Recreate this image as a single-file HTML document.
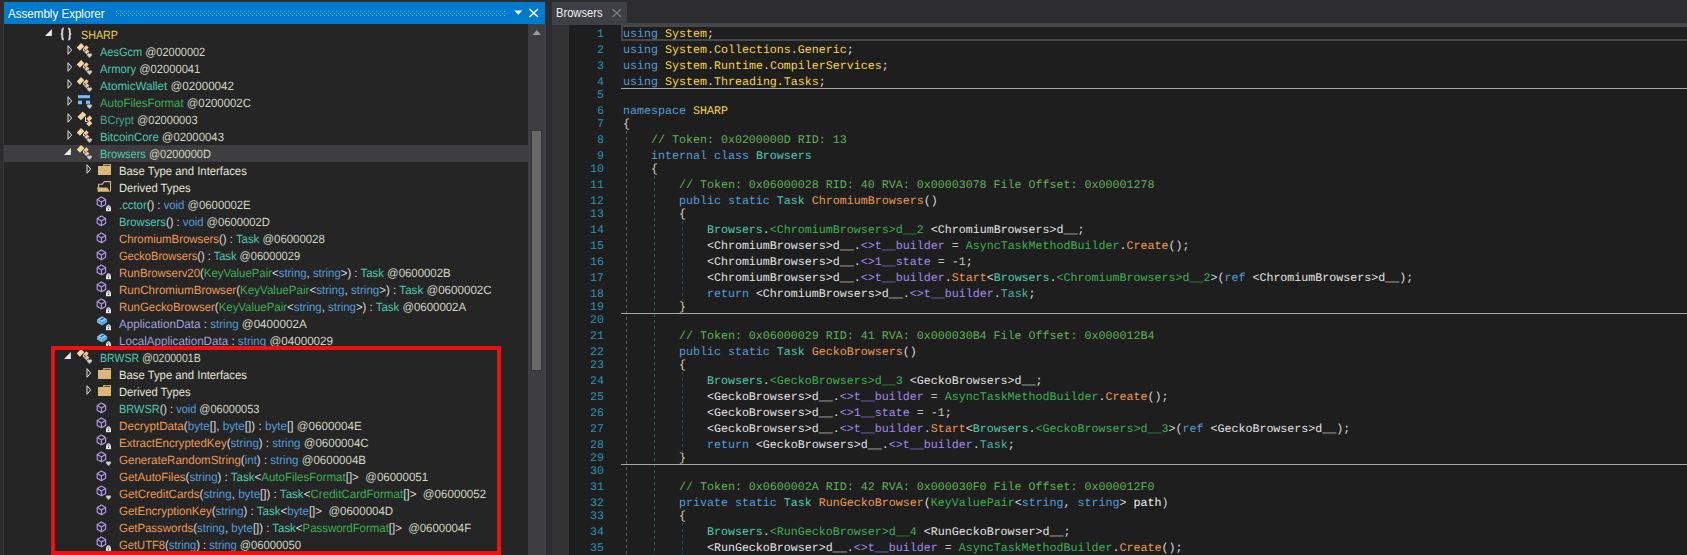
<!DOCTYPE html>
<html><head><meta charset="utf-8"><style>
*{margin:0;padding:0;box-sizing:border-box}
html,body{width:1687px;height:555px;overflow:hidden;background:#2D2D30;position:relative;font-family:"Liberation Sans",sans-serif}
.abs{position:absolute}
#title{position:absolute;left:4px;top:2px;width:541px;height:22px;background:#007ACC}
#title .t{position:absolute;left:3.5px;top:2px;line-height:21px;font-size:12px;color:#FFFFFF;white-space:pre;transform:scaleX(0.965);transform-origin:0 0}
#grip{position:absolute;left:112px;top:8px;width:393px;height:9px;
 background-image:radial-gradient(circle at 1px 1px,#4FA8EC 0.9px,transparent 1px),radial-gradient(circle at 3px 3px,#4FA8EC 0.9px,transparent 1px);
 background-size:4px 4px;background-position:0 0,0 0}
#tree{position:absolute;left:4px;top:24px;width:524px;height:531px;background:#252526;overflow:hidden}
#treein{position:absolute;left:-4px;top:-24px;width:1000px;height:600px}
.sel{position:absolute;left:0;width:528px;height:17px;background:#3E3E40}
.ex,.ic{position:absolute;overflow:visible}
.tr{position:absolute;height:17px;line-height:17px;padding-top:1px;text-rendering:geometricPrecision;font-size:12px;white-space:pre;transform-origin:0 50%}
#sb{position:absolute;left:528px;top:24px;width:18px;height:531px;background:#3E3E42}
#thumb{position:absolute;left:532px;top:131px;width:9px;height:239px;background:#686868;box-shadow:0 0 0 1px #363638}
#red{position:absolute;left:51px;top:346px;width:450px;height:209px;border:4px solid #EE1111}
#lstrip{position:absolute;left:3px;top:24px;width:1px;height:531px;background:#363638}
#tab{position:absolute;left:552px;top:2px;width:75px;height:23px;background:#3F3F46}
#tab .t{position:absolute;left:4px;top:0;line-height:22px;font-size:12px;color:#F1F1F1;white-space:pre;transform:scaleX(0.93);transform-origin:0 0}
#band{position:absolute;left:627px;top:23px;width:1060px;height:2px;background:#444446}
#ed{position:absolute;left:552px;top:25px;width:1135px;height:530px;background:#1E1E1E}
#gm{position:absolute;left:552px;top:25px;width:17px;height:530px;background:#333334}
.cl{position:absolute;left:623px;height:16px;line-height:16px;font-family:"Liberation Mono",monospace;font-size:11.7px;text-rendering:geometricPrecision;white-space:pre;transform:scaleX(0.99700);transform-origin:0 0}
.ln{position:absolute;left:569px;width:35px;text-align:right;height:16px;line-height:16px;font-family:"Liberation Mono",monospace;font-size:11.7px;text-rendering:geometricPrecision;color:#2B91AF;letter-spacing:-0.02px}
.sep{position:absolute;left:621px;width:1066px;height:1px;background:#A8A8A8}
.gd{position:absolute;width:1px;background-size:1px 6px}
#caret{position:absolute;left:621px;top:25px;width:1070px;height:16px;border:2px solid #474747;background:#1E1E1E}
</style></head><body>
<svg width="0" height="0" style="position:absolute"><defs>
<symbol id="excol" viewBox="0 0 7 11"><path d="M1,0.7 L4.6,5 L1,9.3 Z" fill="none" stroke="#E2E2E2" stroke-width="1"/></symbol>
<symbol id="exexp" viewBox="0 0 8 8"><path d="M6.9,0 V7 H-0.1 Z" fill="#E8E8E8"/></symbol>
<symbol id="i_ns" viewBox="0 0 16 16"><g fill="none" stroke="#D6D6D6" stroke-width="1.9"><path d="M5.8,2.5 C4.3,2.5 4.3,3.2 4.3,4.5 V6.8 C4.3,7.6 3.8,8 2.8,8 C3.8,8 4.3,8.4 4.3,9.2 V11.5 C4.3,12.8 4.3,13.5 5.8,13.5"/><path d="M10.2,2.5 C11.7,2.5 11.7,3.2 11.7,4.5 V6.8 C11.7,7.6 12.2,8 13.2,8 C12.2,8 11.7,8.4 11.7,9.2 V11.5 C11.7,12.8 11.7,13.5 10.2,13.5"/></g></symbol>
<symbol id="i_cls" viewBox="0 0 16 16"><rect x="1.1000000000000005" y="2.4000000000000004" width="7.6" height="5.0" fill="#F2D49A" transform="rotate(-45 4.9 4.9)"/><rect x="9.9" y="5.6" width="4.8" height="3.8" fill="#F2CE9C" transform="rotate(-45 12.3 7.5)"/><rect x="9.9" y="10.6" width="4.8" height="3.8" fill="#F2CE9C" transform="rotate(-45 12.3 12.5)"/><path d="M8.5,6.2 V10.6 H10.6" fill="none" stroke="#F0F0F0" stroke-width="1"/></symbol>
<symbol id="i_clsh" viewBox="0 0 16 16"><rect x="0.3999999999999999" y="1.6" width="6.2" height="4.6" fill="#F0D79E" transform="rotate(-45 3.5 3.9)"/><rect x="7.1" y="3.15" width="4.0" height="3.3" fill="#F5C8A2" transform="rotate(-45 9.1 4.8)"/><rect x="8.0" y="7.35" width="4.0" height="3.3" fill="#F5C8A2" transform="rotate(-45 10.0 9.0)"/><path d="M6.5,5.6 V7.9 H8.3" fill="none" stroke="#F4F4F4" stroke-width="1"/><path d="M12.5,15.3 L10.1,12.7 C9.3,11.8 9.7,9.9 11.2,9.9 C11.9,9.9 12.3,10.3 12.5,10.7 C12.7,10.3 13.1,9.9 13.8,9.9 C15.3,9.9 15.7,11.8 14.9,12.7 Z" fill="#CFCFCF" stroke="#252526" stroke-width="0.7"/></symbol>
<symbol id="i_struct" viewBox="0 0 16 16"><rect x="1" y="1.2" width="12" height="3" fill="#75BEFF"/><rect x="1" y="6.6" width="4" height="3.6" fill="#75BEFF"/><rect x="9" y="6.6" width="4" height="3.6" fill="#75BEFF"/><path d="M12.5,15.3 L10.1,12.7 C9.3,11.8 9.7,9.9 11.2,9.9 C11.9,9.9 12.3,10.3 12.5,10.7 C12.7,10.3 13.1,9.9 13.8,9.9 C15.3,9.9 15.7,11.8 14.9,12.7 Z" fill="#CFCFCF" stroke="#252526" stroke-width="0.7"/></symbol>
<symbol id="i_fold" viewBox="0 0 16 16"><path d="M2,3.9 H7.2 V2 H15 V12.9 H2 Z" fill="#DCB67A"/><path d="M8.3,3.3 H14.2" stroke="#3A3020" stroke-width="0.9"/></symbol>
<symbol id="i_foldo" viewBox="0 0 16 16"><path d="M2.6,12.6 V5.3 H6.4 L8.2,2.6 H14.5 V12.6" fill="none" stroke="#DCB67A" stroke-width="1.1"/><path d="M1.1,8.4 H11.2 L14,12.8 H1.9 Z" fill="#DCB67A"/></symbol>
<symbol id="i_meth" viewBox="0 0 16 16"><g transform="translate(0,1.9)"><g fill="none" stroke="#B59AE6" stroke-width="1.15" stroke-linejoin="round"><path d="M5.4,1.1 L9.6,3.5 V8.4 L5.4,10.8 L1.2,8.4 V3.5 Z"/><path d="M1.4,3.6 L5.4,6.1 L9.4,3.6 M5.4,6.1 V10.6"/></g></g></symbol>
<symbol id="i_methl" viewBox="0 0 16 16"><g fill="none" stroke="#B59AE6" stroke-width="1.15" stroke-linejoin="round"><path d="M5.4,1.1 L9.6,3.5 V8.4 L5.4,10.8 L1.2,8.4 V3.5 Z"/><path d="M1.4,3.6 L5.4,6.1 L9.4,3.6 M5.4,6.1 V10.6"/></g><path d="M11.1,11.6 V10.9 C11.1,9.4 13.9,9.4 13.9,10.9 V11.6" fill="none" stroke="#E4E4E4" stroke-width="1.3"/><rect x="10" y="11.3" width="5" height="3.9" fill="#E4E4E4"/><rect x="12" y="12.7" width="1" height="1.2" fill="#3A3A3A"/></symbol>
<symbol id="i_methh" viewBox="0 0 16 16"><g fill="none" stroke="#B59AE6" stroke-width="1.15" stroke-linejoin="round"><path d="M5.4,1.1 L9.6,3.5 V8.4 L5.4,10.8 L1.2,8.4 V3.5 Z"/><path d="M1.4,3.6 L5.4,6.1 L9.4,3.6 M5.4,6.1 V10.6"/></g><path d="M12.5,15.3 L10.1,12.7 C9.3,11.8 9.7,9.9 11.2,9.9 C11.9,9.9 12.3,10.3 12.5,10.7 C12.7,10.3 13.1,9.9 13.8,9.9 C15.3,9.9 15.7,11.8 14.9,12.7 Z" fill="#CFCFCF" stroke="#252526" stroke-width="0.7"/></symbol>
<symbol id="i_fldl" viewBox="0 0 16 16"><path d="M1,4.6 L6,1.3 L11.2,4.2 L6.2,7.4 Z" fill="#8ACAFF"/><path d="M1,4.6 L6.2,7.4 V10.4 L1,7.6 Z" fill="#6AB6F2"/><path d="M6.2,7.4 L11.2,4.2 V7.3 L6.2,10.4 Z" fill="#5AAAE8"/><path d="M4.6,4.9 L7.6,3" stroke="#1E3A55" stroke-width="1.1"/><path d="M11.1,11.6 V10.9 C11.1,9.4 13.9,9.4 13.9,10.9 V11.6" fill="none" stroke="#E4E4E4" stroke-width="1.3"/><rect x="10" y="11.3" width="5" height="3.9" fill="#E4E4E4"/><rect x="12" y="12.7" width="1" height="1.2" fill="#3A3A3A"/></symbol>
</defs></svg>
<div id="title"><div class="t">Assembly Explorer</div></div>
<svg class="abs" style="left:116px;top:11px" width="390" height="5"><defs><pattern id="gp" width="4" height="4" patternUnits="userSpaceOnUse"><rect x="0" y="0" width="1" height="1" fill="#62BAF6"/><rect x="2" y="2" width="1" height="1" fill="#62BAF6"/></pattern></defs><rect width="390" height="5" fill="url(#gp)"/></svg>
<svg class="abs" style="left:514px;top:10px" width="9" height="6"><path d="M0.3,0.5 H8.3 L4.3,4.8 Z" fill="#FFFFFF"/></svg>
<svg class="abs" style="left:528px;top:8px" width="12" height="10"><path d="M1.5,1 L10,9 M10,1 L1.5,9" stroke="#FFFFFF" stroke-width="1.6"/></svg>
<div id="tree"><div id="treein">
<svg class="ex" style="left:45px;top:29px" width="8" height="8"><use href="#exexp"/></svg><svg class="ic" style="left:58px;top:26px" width="16" height="16"><use href="#i_ns"/></svg><div class="tr" id="r0" style="left:81.00px;top:26px;transform:scaleX(0.8927)"><span style="color:#EDCF55">SHARP</span></div><svg class="ex" style="left:67px;top:45px" width="7" height="11"><use href="#excol"/></svg><svg class="ic" style="left:77px;top:43px" width="16" height="16"><use href="#i_clsh"/></svg><div class="tr" id="r1" style="left:100.00px;top:43px;transform:scaleX(0.9157)"><span style="color:#4EC9B0">AesGcm</span><span style="color:#D2D6C2"> @02000002</span></div><svg class="ex" style="left:67px;top:62px" width="7" height="11"><use href="#excol"/></svg><svg class="ic" style="left:77px;top:60px" width="16" height="16"><use href="#i_clsh"/></svg><div class="tr" id="r2" style="left:100.00px;top:60px;transform:scaleX(0.9324)"><span style="color:#4EC9B0">Armory</span><span style="color:#D2D6C2"> @02000041</span></div><svg class="ex" style="left:67px;top:79px" width="7" height="11"><use href="#excol"/></svg><svg class="ic" style="left:77px;top:77px" width="16" height="16"><use href="#i_clsh"/></svg><div class="tr" id="r3" style="left:100.00px;top:77px;transform:scaleX(0.9674)"><span style="color:#4EC9B0">AtomicWallet</span><span style="color:#D2D6C2"> @02000042</span></div><svg class="ex" style="left:67px;top:96px" width="7" height="11"><use href="#excol"/></svg><svg class="ic" style="left:77px;top:94px" width="16" height="16"><use href="#i_struct"/></svg><div class="tr" id="r4" style="left:100.00px;top:94px;transform:scaleX(0.9497)"><span style="color:#3DAE55">AutoFilesFormat</span><span style="color:#D2D6C2"> @0200002C</span></div><svg class="ex" style="left:67px;top:113px" width="7" height="11"><use href="#excol"/></svg><svg class="ic" style="left:77px;top:111px" width="16" height="16"><use href="#i_cls"/></svg><div class="tr" id="r5" style="left:100.00px;top:111px;transform:scaleX(0.9245)"><span style="color:#40A68B">BCrypt</span><span style="color:#D2D6C2"> @02000003</span></div><svg class="ex" style="left:67px;top:130px" width="7" height="11"><use href="#excol"/></svg><svg class="ic" style="left:77px;top:128px" width="16" height="16"><use href="#i_clsh"/></svg><div class="tr" id="r6" style="left:100.00px;top:128px;transform:scaleX(0.9466)"><span style="color:#4EC9B0">BitcoinCore</span><span style="color:#D2D6C2"> @02000043</span></div><div class="sel" style="top:145px"></div><svg class="ex" style="left:64px;top:148px" width="8" height="8"><use href="#exexp"/></svg><svg class="ic" style="left:77px;top:145px" width="16" height="16"><use href="#i_clsh"/></svg><div class="tr" id="r7" style="left:100.00px;top:145px;transform:scaleX(0.9174)"><span style="color:#4EC9B0">Browsers</span><span style="color:#D2D6C2"> @0200000D</span></div><svg class="ex" style="left:86px;top:164px" width="7" height="11"><use href="#excol"/></svg><svg class="ic" style="left:96px;top:162px" width="16" height="16"><use href="#i_fold"/></svg><div class="tr" id="r8" style="left:119.00px;top:162px;transform:scaleX(0.9404)"><span style="color:#E6E6D8">Base Type and Interfaces</span></div><svg class="ic" style="left:96px;top:179px" width="16" height="16"><use href="#i_foldo"/></svg><div class="tr" id="r9" style="left:119.00px;top:179px;transform:scaleX(0.9351)"><span style="color:#E6E6D8">Derived Types</span></div><svg class="ic" style="left:96px;top:196px" width="16" height="16"><use href="#i_methl"/></svg><div class="tr" id="r10" style="left:119.00px;top:196px;transform:scaleX(0.9429)"><span style="color:#4EC9B0">.cctor</span><span style="color:#DCDCDC">() : </span><span style="color:#569CD6">void</span><span style="color:#D2D6C2"> @0600002E</span></div><svg class="ic" style="left:96px;top:213px" width="16" height="16"><use href="#i_meth"/></svg><div class="tr" id="r11" style="left:119.00px;top:213px;transform:scaleX(0.9379)"><span style="color:#4EC9B0">Browsers</span><span style="color:#DCDCDC">() : </span><span style="color:#569CD6">void</span><span style="color:#D2D6C2"> @0600002D</span></div><svg class="ic" style="left:96px;top:230px" width="16" height="16"><use href="#i_meth"/></svg><div class="tr" id="r12" style="left:119.00px;top:230px;transform:scaleX(0.9493)"><span style="color:#EC9A52">ChromiumBrowsers</span><span style="color:#DCDCDC">() : </span><span style="color:#4EC9B0">Task</span><span style="color:#D2D6C2"> @06000028</span></div><svg class="ic" style="left:96px;top:247px" width="16" height="16"><use href="#i_meth"/></svg><div class="tr" id="r13" style="left:119.00px;top:247px;transform:scaleX(0.9235)"><span style="color:#EC9A52">GeckoBrowsers</span><span style="color:#DCDCDC">() : </span><span style="color:#4EC9B0">Task</span><span style="color:#D2D6C2"> @06000029</span></div><svg class="ic" style="left:96px;top:264px" width="16" height="16"><use href="#i_methl"/></svg><div class="tr" id="r14" style="left:119.00px;top:264px;transform:scaleX(0.9493)"><span style="color:#EC9A52">RunBrowserv20</span><span style="color:#DCDCDC">(</span><span style="color:#3DAE55">KeyValuePair</span><span style="color:#DCDCDC">&lt;</span><span style="color:#569CD6">string</span><span style="color:#DCDCDC">, </span><span style="color:#569CD6">string</span><span style="color:#DCDCDC">&gt;) : </span><span style="color:#4EC9B0">Task</span><span style="color:#D2D6C2"> @0600002B</span></div><svg class="ic" style="left:96px;top:281px" width="16" height="16"><use href="#i_methl"/></svg><div class="tr" id="r15" style="left:119.00px;top:281px;transform:scaleX(0.9655)"><span style="color:#EC9A52">RunChromiumBrowser</span><span style="color:#DCDCDC">(</span><span style="color:#3DAE55">KeyValuePair</span><span style="color:#DCDCDC">&lt;</span><span style="color:#569CD6">string</span><span style="color:#DCDCDC">, </span><span style="color:#569CD6">string</span><span style="color:#DCDCDC">&gt;) : </span><span style="color:#4EC9B0">Task</span><span style="color:#D2D6C2"> @0600002C</span></div><svg class="ic" style="left:96px;top:298px" width="16" height="16"><use href="#i_methl"/></svg><div class="tr" id="r16" style="left:119.00px;top:298px;transform:scaleX(0.9518)"><span style="color:#EC9A52">RunGeckoBrowser</span><span style="color:#DCDCDC">(</span><span style="color:#3DAE55">KeyValuePair</span><span style="color:#DCDCDC">&lt;</span><span style="color:#569CD6">string</span><span style="color:#DCDCDC">, </span><span style="color:#569CD6">string</span><span style="color:#DCDCDC">&gt;) : </span><span style="color:#4EC9B0">Task</span><span style="color:#D2D6C2"> @0600002A</span></div><svg class="ic" style="left:96px;top:315px" width="16" height="16"><use href="#i_fldl"/></svg><div class="tr" id="r17" style="left:119.00px;top:315px;transform:scaleX(0.9691)"><span style="color:#A0A0D8">ApplicationData</span><span style="color:#DCDCDC"> : </span><span style="color:#569CD6">string</span><span style="color:#D2D6C2"> @0400002A</span></div><svg class="ic" style="left:96px;top:332px" width="16" height="16"><use href="#i_fldl"/></svg><div class="tr" id="r18" style="left:119.00px;top:332px;transform:scaleX(0.9683)"><span style="color:#A0A0D8">LocalApplicationData</span><span style="color:#DCDCDC"> : </span><span style="color:#569CD6">string</span><span style="color:#D2D6C2"> @04000029</span></div><svg class="ex" style="left:64px;top:352px" width="8" height="8"><use href="#exexp"/></svg><svg class="ic" style="left:77px;top:349px" width="16" height="16"><use href="#i_clsh"/></svg><div class="tr" id="r19" style="left:100.00px;top:349px;transform:scaleX(0.8783)"><span style="color:#4EC9B0">BRWSR</span><span style="color:#D2D6C2"> @0200001B</span></div><svg class="ex" style="left:86px;top:368px" width="7" height="11"><use href="#excol"/></svg><svg class="ic" style="left:96px;top:366px" width="16" height="16"><use href="#i_fold"/></svg><div class="tr" id="r20" style="left:119.00px;top:366px;transform:scaleX(0.9412)"><span style="color:#E6E6D8">Base Type and Interfaces</span></div><svg class="ex" style="left:86px;top:385px" width="7" height="11"><use href="#excol"/></svg><svg class="ic" style="left:96px;top:383px" width="16" height="16"><use href="#i_fold"/></svg><div class="tr" id="r21" style="left:119.00px;top:383px;transform:scaleX(0.9351)"><span style="color:#E6E6D8">Derived Types</span></div><svg class="ic" style="left:96px;top:400px" width="16" height="16"><use href="#i_meth"/></svg><div class="tr" id="r22" style="left:119.00px;top:400px;transform:scaleX(0.9150)"><span style="color:#4EC9B0">BRWSR</span><span style="color:#DCDCDC">() : </span><span style="color:#569CD6">void</span><span style="color:#D2D6C2"> @06000053</span></div><svg class="ic" style="left:96px;top:417px" width="16" height="16"><use href="#i_methl"/></svg><div class="tr" id="r23" style="left:119.00px;top:417px;transform:scaleX(0.9720)"><span style="color:#EC9A52">DecryptData</span><span style="color:#DCDCDC">(</span><span style="color:#569CD6">byte</span><span style="color:#DCDCDC">[], </span><span style="color:#569CD6">byte</span><span style="color:#DCDCDC">[]) : </span><span style="color:#569CD6">byte</span><span style="color:#DCDCDC">[]</span><span style="color:#D2D6C2"> @0600004E</span></div><svg class="ic" style="left:96px;top:434px" width="16" height="16"><use href="#i_methl"/></svg><div class="tr" id="r24" style="left:119.00px;top:434px;transform:scaleX(0.9614)"><span style="color:#EC9A52">ExtractEncryptedKey</span><span style="color:#DCDCDC">(</span><span style="color:#569CD6">string</span><span style="color:#DCDCDC">) : </span><span style="color:#569CD6">string</span><span style="color:#D2D6C2"> @0600004C</span></div><svg class="ic" style="left:96px;top:451px" width="16" height="16"><use href="#i_methh"/></svg><div class="tr" id="r25" style="left:119.00px;top:451px;transform:scaleX(0.9611)"><span style="color:#EC9A52">GenerateRandomString</span><span style="color:#DCDCDC">(</span><span style="color:#569CD6">int</span><span style="color:#DCDCDC">) : </span><span style="color:#569CD6">string</span><span style="color:#D2D6C2"> @0600004B</span></div><svg class="ic" style="left:96px;top:468px" width="16" height="16"><use href="#i_meth"/></svg><div class="tr" id="r26" style="left:119.00px;top:468px;transform:scaleX(0.9596)"><span style="color:#EC9A52">GetAutoFiles</span><span style="color:#DCDCDC">(</span><span style="color:#569CD6">string</span><span style="color:#DCDCDC">) : </span><span style="color:#4EC9B0">Task</span><span style="color:#DCDCDC">&lt;</span><span style="color:#3DAE55">AutoFilesFormat</span><span style="color:#DCDCDC">[]&gt; </span><span style="color:#D2D6C2"> @06000051</span></div><svg class="ic" style="left:96px;top:485px" width="16" height="16"><use href="#i_methh"/></svg><div class="tr" id="r27" style="left:119.00px;top:485px;transform:scaleX(0.9658)"><span style="color:#EC9A52">GetCreditCards</span><span style="color:#DCDCDC">(</span><span style="color:#569CD6">string</span><span style="color:#DCDCDC">, </span><span style="color:#569CD6">byte</span><span style="color:#DCDCDC">[]) : </span><span style="color:#4EC9B0">Task</span><span style="color:#DCDCDC">&lt;</span><span style="color:#3DAE55">CreditCardFormat</span><span style="color:#DCDCDC">[]&gt; </span><span style="color:#D2D6C2"> @06000052</span></div><svg class="ic" style="left:96px;top:502px" width="16" height="16"><use href="#i_meth"/></svg><div class="tr" id="r28" style="left:119.00px;top:502px;transform:scaleX(0.9580)"><span style="color:#EC9A52">GetEncryptionKey</span><span style="color:#DCDCDC">(</span><span style="color:#569CD6">string</span><span style="color:#DCDCDC">) : </span><span style="color:#4EC9B0">Task</span><span style="color:#DCDCDC">&lt;</span><span style="color:#569CD6">byte</span><span style="color:#DCDCDC">[]&gt; </span><span style="color:#D2D6C2"> @0600004D</span></div><svg class="ic" style="left:96px;top:519px" width="16" height="16"><use href="#i_meth"/></svg><div class="tr" id="r29" style="left:119.00px;top:519px;transform:scaleX(0.9514)"><span style="color:#EC9A52">GetPasswords</span><span style="color:#DCDCDC">(</span><span style="color:#569CD6">string</span><span style="color:#DCDCDC">, </span><span style="color:#569CD6">byte</span><span style="color:#DCDCDC">[]) : </span><span style="color:#4EC9B0">Task</span><span style="color:#DCDCDC">&lt;</span><span style="color:#3DAE55">PasswordFormat</span><span style="color:#DCDCDC">[]&gt; </span><span style="color:#D2D6C2"> @0600004F</span></div><svg class="ic" style="left:96px;top:536px" width="16" height="16"><use href="#i_methl"/></svg><div class="tr" id="r30" style="left:119.00px;top:536px;transform:scaleX(0.9333)"><span style="color:#EC9A52">GetUTF8</span><span style="color:#DCDCDC">(</span><span style="color:#569CD6">string</span><span style="color:#DCDCDC">) : </span><span style="color:#569CD6">string</span><span style="color:#D2D6C2"> @06000050</span></div>
</div></div>
<div id="sb"></div>
<svg class="abs" style="left:532px;top:29px" width="10" height="7"><path d="M0.5,6 L4.8,1 L9,6 Z" fill="#999999"/></svg>
<div id="thumb"></div>
<div id="red"></div><div id="lstrip"></div>
<div id="tab"><div class="t">Browsers</div></div>
<svg class="abs" style="left:611px;top:8px" width="12" height="10"><path d="M1.5,1 L10,9 M10,1 L1.5,9" stroke="#7E7E7E" stroke-width="1.15"/></svg>
<div id="band"></div>
<div id="ed"></div>
<div id="gm"></div>
<div id="caret"></div>
<div class="gd" style="left:626px;top:131px;height:424px;background-image:linear-gradient(#5E5E5E 50%, transparent 50%)"></div><div class="gd" style="left:654px;top:176px;height:379px;background-image:linear-gradient(#2A6254 50%, transparent 50%)"></div><div class="gd" style="left:682px;top:221px;height:80px;background-image:linear-gradient(#26486E 50%, transparent 50%)"></div><div class="gd" style="left:682px;top:372px;height:80px;background-image:linear-gradient(#26486E 50%, transparent 50%)"></div><div class="gd" style="left:682px;top:523px;height:32px;background-image:linear-gradient(#26486E 50%, transparent 50%)"></div>
<div class="sep" style="top:88px"></div><div class="sep" style="top:313px"></div><div class="sep" style="top:464px"></div>
<div class="cl" style="top:26px"><span style="color:#569CD6">using</span><span style="color:#DCDCDC"> </span><span style="color:#F5D548">System</span><span style="color:#DCDCDC">;</span></div><div class="ln" style="top:26px">1</div><div class="cl" style="top:42px"><span style="color:#569CD6">using</span><span style="color:#DCDCDC"> </span><span style="color:#F5D548">System</span><span style="color:#DCDCDC">.</span><span style="color:#F5D548">Collections</span><span style="color:#DCDCDC">.</span><span style="color:#F5D548">Generic</span><span style="color:#DCDCDC">;</span></div><div class="ln" style="top:42px">2</div><div class="cl" style="top:58px"><span style="color:#569CD6">using</span><span style="color:#DCDCDC"> </span><span style="color:#F5D548">System</span><span style="color:#DCDCDC">.</span><span style="color:#F5D548">Runtime</span><span style="color:#DCDCDC">.</span><span style="color:#F5D548">CompilerServices</span><span style="color:#DCDCDC">;</span></div><div class="ln" style="top:58px">3</div><div class="cl" style="top:74px"><span style="color:#569CD6">using</span><span style="color:#DCDCDC"> </span><span style="color:#F5D548">System</span><span style="color:#DCDCDC">.</span><span style="color:#F5D548">Threading</span><span style="color:#DCDCDC">.</span><span style="color:#F5D548">Tasks</span><span style="color:#DCDCDC">;</span></div><div class="ln" style="top:74px">4</div><div class="cl" style="top:87px"></div><div class="ln" style="top:87px">5</div><div class="cl" style="top:103px"><span style="color:#569CD6">namespace</span><span style="color:#DCDCDC"> </span><span style="color:#F5D548">SHARP</span></div><div class="ln" style="top:103px">6</div><div class="cl" style="top:116px"><span style="color:#DCD2BC">{</span></div><div class="ln" style="top:116px">7</div><div class="cl" style="top:132px"><span style="color:#DCDCDC">    </span><span style="color:#62AE5C">// Token: 0x0200000D RID: 13</span></div><div class="ln" style="top:132px">8</div><div class="cl" style="top:148px"><span style="color:#DCDCDC">    </span><span style="color:#569CD6">internal</span><span style="color:#DCDCDC"> </span><span style="color:#569CD6">class</span><span style="color:#DCDCDC"> </span><span style="color:#4EC9B0">Browsers</span></div><div class="ln" style="top:148px">9</div><div class="cl" style="top:161px"><span style="color:#DCDCDC">    </span><span style="color:#DCD2BC">{</span></div><div class="ln" style="top:161px">10</div><div class="cl" style="top:177px"><span style="color:#DCDCDC">        </span><span style="color:#62AE5C">// Token: 0x06000028 RID: 40 RVA: 0x00003078 File Offset: 0x00001278</span></div><div class="ln" style="top:177px">11</div><div class="cl" style="top:193px"><span style="color:#DCDCDC">        </span><span style="color:#569CD6">public</span><span style="color:#DCDCDC"> </span><span style="color:#569CD6">static</span><span style="color:#DCDCDC"> </span><span style="color:#4EC9B0">Task</span><span style="color:#DCDCDC"> </span><span style="color:#EC9A52">ChromiumBrowsers</span><span style="color:#DCDCDC">()</span></div><div class="ln" style="top:193px">12</div><div class="cl" style="top:206px"><span style="color:#DCDCDC">        </span><span style="color:#DCD2BC">{</span></div><div class="ln" style="top:206px">13</div><div class="cl" style="top:222px"><span style="color:#DCDCDC">            </span><span style="color:#4EC9B0">Browsers</span><span style="color:#DCDCDC">.</span><span style="color:#3DAE55">&lt;ChromiumBrowsers&gt;d__2</span><span style="color:#DCDCDC"> </span><span style="color:#E2E2E2">&lt;ChromiumBrowsers&gt;d__</span><span style="color:#DCDCDC">;</span></div><div class="ln" style="top:222px">14</div><div class="cl" style="top:238px"><span style="color:#DCDCDC">            </span><span style="color:#E2E2E2">&lt;ChromiumBrowsers&gt;d__</span><span style="color:#DCDCDC">.</span><span style="color:#A08BEA">&lt;&gt;t__builder</span><span style="color:#DCDCDC"> = </span><span style="color:#3DAE55">AsyncTaskMethodBuilder</span><span style="color:#DCDCDC">.</span><span style="color:#EC9A52">Create</span><span style="color:#DCDCDC">();</span></div><div class="ln" style="top:238px">15</div><div class="cl" style="top:254px"><span style="color:#DCDCDC">            </span><span style="color:#E2E2E2">&lt;ChromiumBrowsers&gt;d__</span><span style="color:#DCDCDC">.</span><span style="color:#A08BEA">&lt;&gt;1__state</span><span style="color:#DCDCDC"> = -</span><span style="color:#B5CEA8">1</span><span style="color:#DCDCDC">;</span></div><div class="ln" style="top:254px">16</div><div class="cl" style="top:270px"><span style="color:#DCDCDC">            </span><span style="color:#E2E2E2">&lt;ChromiumBrowsers&gt;d__</span><span style="color:#DCDCDC">.</span><span style="color:#A08BEA">&lt;&gt;t__builder</span><span style="color:#DCDCDC">.</span><span style="color:#EC9A52">Start</span><span style="color:#DCDCDC">&lt;</span><span style="color:#4EC9B0">Browsers</span><span style="color:#DCDCDC">.</span><span style="color:#3DAE55">&lt;ChromiumBrowsers&gt;d__2</span><span style="color:#DCDCDC">&gt;(</span><span style="color:#569CD6">ref</span><span style="color:#DCDCDC"> </span><span style="color:#E2E2E2">&lt;ChromiumBrowsers&gt;d__</span><span style="color:#DCDCDC">);</span></div><div class="ln" style="top:270px">17</div><div class="cl" style="top:286px"><span style="color:#DCDCDC">            </span><span style="color:#569CD6">return</span><span style="color:#DCDCDC"> </span><span style="color:#E2E2E2">&lt;ChromiumBrowsers&gt;d__</span><span style="color:#DCDCDC">.</span><span style="color:#A08BEA">&lt;&gt;t__builder</span><span style="color:#DCDCDC">.</span><span style="color:#48B4A2">Task</span><span style="color:#DCDCDC">;</span></div><div class="ln" style="top:286px">18</div><div class="cl" style="top:299px"><span style="color:#DCDCDC">        </span><span style="color:#DCD2BC">}</span></div><div class="ln" style="top:299px">19</div><div class="cl" style="top:312px"></div><div class="ln" style="top:312px">20</div><div class="cl" style="top:328px"><span style="color:#DCDCDC">        </span><span style="color:#62AE5C">// Token: 0x06000029 RID: 41 RVA: 0x000030B4 File Offset: 0x000012B4</span></div><div class="ln" style="top:328px">21</div><div class="cl" style="top:344px"><span style="color:#DCDCDC">        </span><span style="color:#569CD6">public</span><span style="color:#DCDCDC"> </span><span style="color:#569CD6">static</span><span style="color:#DCDCDC"> </span><span style="color:#4EC9B0">Task</span><span style="color:#DCDCDC"> </span><span style="color:#EC9A52">GeckoBrowsers</span><span style="color:#DCDCDC">()</span></div><div class="ln" style="top:344px">22</div><div class="cl" style="top:357px"><span style="color:#DCDCDC">        </span><span style="color:#DCD2BC">{</span></div><div class="ln" style="top:357px">23</div><div class="cl" style="top:373px"><span style="color:#DCDCDC">            </span><span style="color:#4EC9B0">Browsers</span><span style="color:#DCDCDC">.</span><span style="color:#3DAE55">&lt;GeckoBrowsers&gt;d__3</span><span style="color:#DCDCDC"> </span><span style="color:#E2E2E2">&lt;GeckoBrowsers&gt;d__</span><span style="color:#DCDCDC">;</span></div><div class="ln" style="top:373px">24</div><div class="cl" style="top:389px"><span style="color:#DCDCDC">            </span><span style="color:#E2E2E2">&lt;GeckoBrowsers&gt;d__</span><span style="color:#DCDCDC">.</span><span style="color:#A08BEA">&lt;&gt;t__builder</span><span style="color:#DCDCDC"> = </span><span style="color:#3DAE55">AsyncTaskMethodBuilder</span><span style="color:#DCDCDC">.</span><span style="color:#EC9A52">Create</span><span style="color:#DCDCDC">();</span></div><div class="ln" style="top:389px">25</div><div class="cl" style="top:405px"><span style="color:#DCDCDC">            </span><span style="color:#E2E2E2">&lt;GeckoBrowsers&gt;d__</span><span style="color:#DCDCDC">.</span><span style="color:#A08BEA">&lt;&gt;1__state</span><span style="color:#DCDCDC"> = -</span><span style="color:#B5CEA8">1</span><span style="color:#DCDCDC">;</span></div><div class="ln" style="top:405px">26</div><div class="cl" style="top:421px"><span style="color:#DCDCDC">            </span><span style="color:#E2E2E2">&lt;GeckoBrowsers&gt;d__</span><span style="color:#DCDCDC">.</span><span style="color:#A08BEA">&lt;&gt;t__builder</span><span style="color:#DCDCDC">.</span><span style="color:#EC9A52">Start</span><span style="color:#DCDCDC">&lt;</span><span style="color:#4EC9B0">Browsers</span><span style="color:#DCDCDC">.</span><span style="color:#3DAE55">&lt;GeckoBrowsers&gt;d__3</span><span style="color:#DCDCDC">&gt;(</span><span style="color:#569CD6">ref</span><span style="color:#DCDCDC"> </span><span style="color:#E2E2E2">&lt;GeckoBrowsers&gt;d__</span><span style="color:#DCDCDC">);</span></div><div class="ln" style="top:421px">27</div><div class="cl" style="top:437px"><span style="color:#DCDCDC">            </span><span style="color:#569CD6">return</span><span style="color:#DCDCDC"> </span><span style="color:#E2E2E2">&lt;GeckoBrowsers&gt;d__</span><span style="color:#DCDCDC">.</span><span style="color:#A08BEA">&lt;&gt;t__builder</span><span style="color:#DCDCDC">.</span><span style="color:#48B4A2">Task</span><span style="color:#DCDCDC">;</span></div><div class="ln" style="top:437px">28</div><div class="cl" style="top:450px"><span style="color:#DCDCDC">        </span><span style="color:#DCD2BC">}</span></div><div class="ln" style="top:450px">29</div><div class="cl" style="top:463px"></div><div class="ln" style="top:463px">30</div><div class="cl" style="top:479px"><span style="color:#DCDCDC">        </span><span style="color:#62AE5C">// Token: 0x0600002A RID: 42 RVA: 0x000030F0 File Offset: 0x000012F0</span></div><div class="ln" style="top:479px">31</div><div class="cl" style="top:495px"><span style="color:#DCDCDC">        </span><span style="color:#569CD6">private</span><span style="color:#DCDCDC"> </span><span style="color:#569CD6">static</span><span style="color:#DCDCDC"> </span><span style="color:#4EC9B0">Task</span><span style="color:#DCDCDC"> </span><span style="color:#EC9A52">RunGeckoBrowser</span><span style="color:#DCDCDC">(</span><span style="color:#3DAE55">KeyValuePair</span><span style="color:#DCDCDC">&lt;</span><span style="color:#569CD6">string</span><span style="color:#DCDCDC">, </span><span style="color:#569CD6">string</span><span style="color:#DCDCDC">&gt; </span><span style="color:#F4F4F4">path</span><span style="color:#DCDCDC">)</span></div><div class="ln" style="top:495px">32</div><div class="cl" style="top:508px"><span style="color:#DCDCDC">        </span><span style="color:#DCD2BC">{</span></div><div class="ln" style="top:508px">33</div><div class="cl" style="top:524px"><span style="color:#DCDCDC">            </span><span style="color:#4EC9B0">Browsers</span><span style="color:#DCDCDC">.</span><span style="color:#3DAE55">&lt;RunGeckoBrowser&gt;d__4</span><span style="color:#DCDCDC"> </span><span style="color:#E2E2E2">&lt;RunGeckoBrowser&gt;d__</span><span style="color:#DCDCDC">;</span></div><div class="ln" style="top:524px">34</div><div class="cl" style="top:540px"><span style="color:#DCDCDC">            </span><span style="color:#E2E2E2">&lt;RunGeckoBrowser&gt;d__</span><span style="color:#DCDCDC">.</span><span style="color:#A08BEA">&lt;&gt;t__builder</span><span style="color:#DCDCDC"> = </span><span style="color:#3DAE55">AsyncTaskMethodBuilder</span><span style="color:#DCDCDC">.</span><span style="color:#EC9A52">Create</span><span style="color:#DCDCDC">();</span></div><div class="ln" style="top:540px">35</div>
</body></html>
